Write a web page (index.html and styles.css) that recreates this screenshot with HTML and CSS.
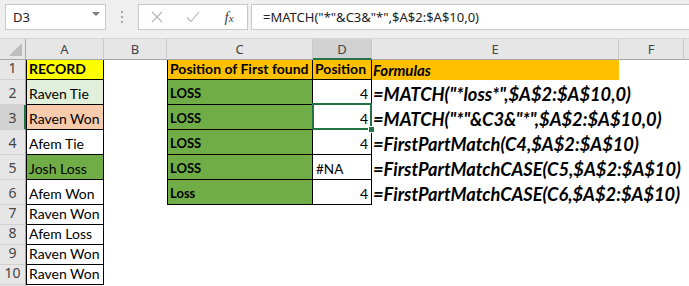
FILE: index.html
```html
<!DOCTYPE html>
<html>
<head>
<meta charset="utf-8">
<link rel="stylesheet" href="styles.css">
</head>
<body>
<div class="app">
  <div class="fbar">
    <div class="namebox"><span>D3</span><span class="caret"></span></div>
    <div class="dots"><i></i><i></i><i></i></div>
    <div class="btns">
      <span class="btn"><svg width="12" height="12" viewBox="0 0 12 12"><path d="M1 1 L11 11 M11 1 L1 11" stroke="#B4B4B4" stroke-width="1.1" fill="none"/></svg></span>
      <span class="btn"><svg width="14" height="12" viewBox="0 0 14 12"><path d="M1 6.5 L5 10.5 L13 1" stroke="#B4B4B4" stroke-width="1.1" fill="none"/></svg></span>
      <span class="btn fx"><i>f<small>x</small></i></span>
    </div>
    <div class="input">=MATCH("*"&amp;C3&amp;"*",$A$2:$A$10,0)</div>
  </div>
  <div class="sheet">
    <div class="ch corner"><span class="tri"></span></div>
    <div class="ch">A</div>
    <div class="ch">B</div>
    <div class="ch">C</div>
    <div class="ch sel">D</div>
    <div class="ch">E</div>
    <div class="ch">F</div>
    <div class="ch last"></div>

    <div class="rh">1</div>
    <div class="c b bl yellow bold">RECORD</div>
    <div class="c"></div>
    <div class="c b bl orange bold">Position of First found</div>
    <div class="c b orange bold">Position</div>
    <div class="c orange bold it">Formulas</div>
    <div class="c"></div>
    <div class="c"></div>

    <div class="rh">2</div>
    <div class="c b bl lgreen">Raven Tie</div>
    <div class="c"></div>
    <div class="c b bl green bold small">LOSS</div>
    <div class="c b r">4</div>
    <div class="c fm">=MATCH("*loss*",$A$2:$A$10,0)</div>
    <div class="c"></div>
    <div class="c"></div>

    <div class="rh sel">3</div>
    <div class="c b bl peach">Raven Won</div>
    <div class="c"></div>
    <div class="c b bl green bold small">LOSS</div>
    <div class="c b r active">4<span class="selbox"><span class="handle"></span></span></div>
    <div class="c fm">=MATCH("*"&amp;C3&amp;"*",$A$2:$A$10,0)</div>
    <div class="c"></div>
    <div class="c"></div>

    <div class="rh">4</div>
    <div class="c b bl">Afem Tie</div>
    <div class="c"></div>
    <div class="c b bl green bold small">LOSS</div>
    <div class="c b r">4</div>
    <div class="c fm">=FirstPartMatch(C4,$A$2:$A$10)</div>
    <div class="c"></div>
    <div class="c"></div>

    <div class="rh">5</div>
    <div class="c b bl green">Josh Loss</div>
    <div class="c"></div>
    <div class="c b bl green bold small">LOSS</div>
    <div class="c b na">#NA</div>
    <div class="c fm">=FirstPartMatchCASE(C5,$A$2:$A$10)</div>
    <div class="c"></div>
    <div class="c"></div>

    <div class="rh">6</div>
    <div class="c b bl">Afem Won</div>
    <div class="c"></div>
    <div class="c b bl green bold small">Loss</div>
    <div class="c b r">4</div>
    <div class="c fm">=FirstPartMatchCASE(C6,$A$2:$A$10)</div>
    <div class="c"></div>
    <div class="c"></div>

    <div class="rh">7</div>
    <div class="c b bl">Raven Won</div>
    <div class="c"></div><div class="c"></div><div class="c"></div><div class="c"></div><div class="c"></div><div class="c"></div>

    <div class="rh">8</div>
    <div class="c b bl">Afem Loss</div>
    <div class="c"></div><div class="c"></div><div class="c"></div><div class="c"></div><div class="c"></div><div class="c"></div>

    <div class="rh">9</div>
    <div class="c b bl">Raven Won</div>
    <div class="c"></div><div class="c"></div><div class="c"></div><div class="c"></div><div class="c"></div><div class="c"></div>

    <div class="rh">10</div>
    <div class="c b bl">Raven Won</div>
    <div class="c"></div><div class="c"></div><div class="c"></div><div class="c"></div><div class="c"></div><div class="c"></div>

    <div class="rh"></div>
    <div class="c"></div><div class="c"></div><div class="c"></div><div class="c"></div><div class="c"></div><div class="c"></div><div class="c"></div>
  </div>
</div>
</body>
</html>
```

FILE: styles.css
```css
html, body {
  margin: 0;
  padding: 0;
  background: #fff;
}

.app {
  width: 689px;
  height: 286px;
  overflow: hidden;
  background: #fff;
  font-family: Lato, "Liberation Sans", sans-serif;
}

/* formula bar */
.fbar {
  height: 39px;
  box-sizing: border-box;
  padding-top: 4px;
  background: #EFEFEF;
  border-bottom: 1px solid #D6D6D6;
  display: flex;
  align-items: flex-start;
}

.namebox {
  margin-left: 5px;
  width: 101px;
  height: 26px;
  box-sizing: border-box;
  border: 1px solid #C9C9C9;
  background: #fff;
  display: flex;
  align-items: center;
  padding-left: 7px;
  padding-right: 5px;
  font-family: "Noto Sans", "Open Sans", sans-serif;
  font-size: 13px;
  color: #222;
}

.caret {
  margin-left: auto;
  width: 0;
  height: 0;
  border-left: 4px solid transparent;
  border-right: 4px solid transparent;
  border-top: 4px solid #7A7A7A;
  margin-top: -6px;
}

.dots {
  width: 32px;
  height: 26px;
  display: flex;
  flex-direction: column;
  align-items: center;
  justify-content: center;
  gap: 3px;
}

.dots i {
  display: block;
  width: 2px;
  height: 2px;
  background: #A6A6A6;
}

.btns {
  width: 110px;
  height: 26px;
  box-sizing: border-box;
  border: 1px solid #C9C9C9;
  background: #fff;
  display: grid;
  grid-template-columns: 36px 36px 36px;
}

.btn {
  display: flex;
  align-items: center;
  justify-content: center;
}

.fx {
  font-family: "Liberation Serif", serif;
  font-size: 15px;
  color: #444;
}

.fx small {
  font-size: 11px;
}

.input {
  margin-left: 3px;
  flex: 1;
  height: 26px;
  box-sizing: border-box;
  border: 1px solid #C9C9C9;
  border-right: none;
  background: #fff;
  display: flex;
  align-items: center;
  padding-left: 11px;
  font-family: "Noto Sans", "Open Sans", sans-serif;
  font-size: 13px;
  color: #222;
  white-space: nowrap;
}

/* sheet grid */
.sheet {
  display: grid;
  grid-template-columns: 26px 78px 63px 146px 59px 247px 65px 1fr;
  grid-template-rows: 21px 20px 25px 25px 25px 25px 25px 20px 20px 20px 20px 1fr;
  height: 247px;
}

.ch {
  background: #E6E6E6;
  border-right: 1px solid #C8C8C8;
  border-bottom: 1px solid #A6A6A6;
  box-sizing: border-box;
  display: flex;
  align-items: center;
  justify-content: center;
  font-family: "Noto Sans", "Open Sans", sans-serif;
  font-size: 13px;
  color: #444;
}

.ch.last {
  border-right: none;
}

.ch.sel {
  background: #D2D2D2;
  border-bottom: 2px solid #217346;
}

.corner {
  align-items: flex-end;
  justify-content: flex-end;
  border-right-color: #A6A6A6;
}

.tri {
  width: 13px;
  height: 13px;
  margin: 0 3px 3px 0;
  background: #BDBDBD;
  clip-path: polygon(100% 0, 100% 100%, 0 100%);
}

.rh {
  background: #E6E6E6;
  border-right: 1px solid #A6A6A6;
  border-bottom: 1px solid #D0D0D0;
  box-sizing: border-box;
  display: flex;
  align-items: flex-end;
  justify-content: center;
  padding-bottom: 2px;
  font-family: "Noto Sans", "Open Sans", sans-serif;
  font-size: 14px;
  line-height: 18px;
  color: #444;
}

.rh.sel {
  background: #D2D2D2;
  border-right: 2px solid #217346;
  padding-left: 1px;
}

.c {
  box-sizing: border-box;
  min-width: 0;
  display: flex;
  align-items: flex-end;
  padding: 0 3px 1px 2px;
  white-space: nowrap;
  font-size: 14px;
  line-height: 18px;
  color: #000;
}

.b {
  border-right: 1px solid #000;
  border-bottom: 1px solid #000;
}

.bl {
  border-left: 1px solid #000;
}

.yellow { background: #FFFF00; }
.lgreen { background: #E2EFDA; }
.peach { background: #F8CBAD; }
.green { background: #70AD47; }
.orange { background: #FFC000; }

.bold { font-weight: 700; }

.it {
  font-style: italic;
  font-size: 15px;
  padding-left: 1px;
}

.small {
  font-size: 13px;
  padding-bottom: 2px;
}

.r {
  justify-content: flex-end;
}

.na {
  padding-left: 3px;
  font-size: 13.5px;
}

.fm {
  font-weight: 700;
  font-style: italic;
  font-size: 18.3px;
  line-height: 22px;
  padding-left: 1px;
  padding-bottom: 0;
}

.active {
  position: relative;
}

.selbox {
  position: absolute;
  left: -1px;
  top: -2px;
  width: 60px;
  height: 27px;
  box-sizing: border-box;
  border: 2px solid #217346;
  z-index: 1;
}

.handle {
  position: absolute;
  left: 54px;
  top: 21px;
  width: 5px;
  height: 5px;
  background: #217346;
  border: 1px solid #fff;
}
```
